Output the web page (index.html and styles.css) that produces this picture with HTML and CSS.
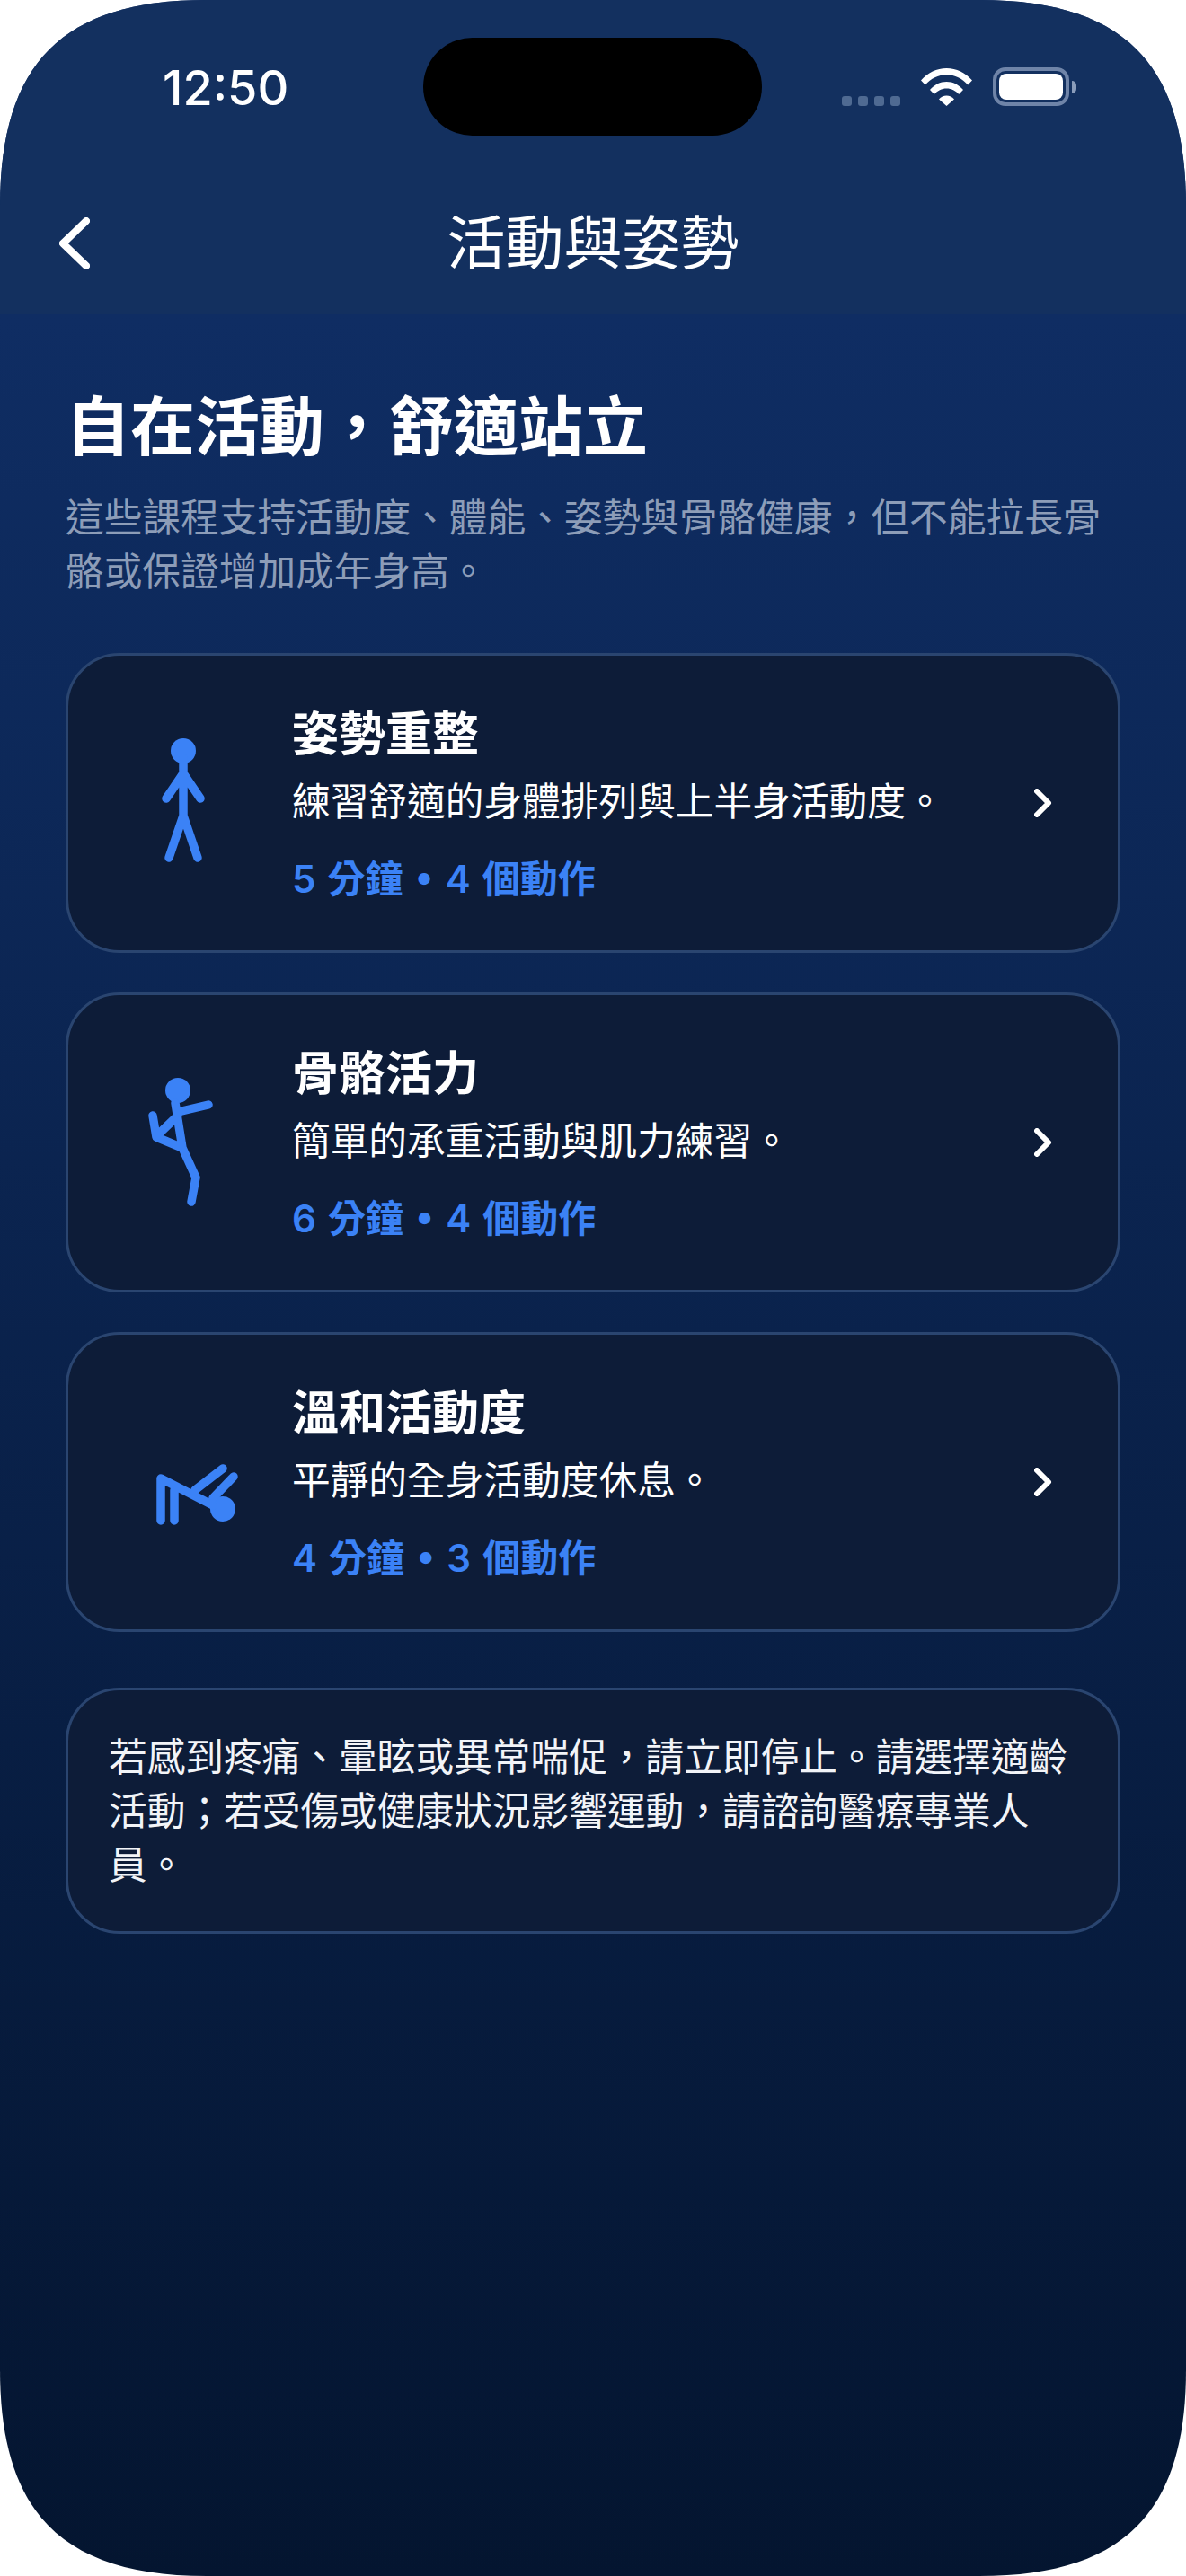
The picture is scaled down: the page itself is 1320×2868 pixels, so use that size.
FILE: index.html
```html
<!DOCTYPE html>
<html lang="zh-Hant">
<head>
<meta charset="utf-8">
<title>活動與姿勢</title>
<link rel="stylesheet" href="styles.css">
</head>
<body>
<div class="screen">
  <header class="top">
    <div class="status">
      <span class="time">12:50</span>
      <div class="island"></div>
      <div class="status-icons">
        <div class="dots"><i></i><i></i><i></i><i></i></div>
        <svg class="wifi" viewBox="0 0 57 42"><path d="M0 13.5C7.500 5 17.500 0 28.500 0S49.500 5 57 13.500L52.200 18.500C46 11.500 37.800 7.300 28.500 7.300S11 11.500 4.800 18.500Z"/><path d="M10 24C15 18.300 21.300 15 28.500 15S42 18.300 47 24L42.200 29C38.500 25 34 22.500 28.500 22.500S18.500 25 14.800 29Z"/><path d="M20 34.500C22.300 32 25.200 30.500 28.500 30.500S34.700 32 37 34.500L28.500 42Z"/></svg>
        <div class="battery"><div class="battery-body"><div class="battery-fill"></div></div><div class="battery-cap"></div></div>
      </div>
    </div>
    <div class="nav">
      <svg class="back" viewBox="0 0 34 58"><path d="M30 4 4 29l26 25"/></svg>
      <h1 class="nav-title">活動與姿勢</h1>
    </div>
  </header>
  <main class="content">
    <h2 class="heading">自在活動，舒適站立</h2>
    <p class="lead">這些課程支持活動度、體能、姿勢與骨骼健康，但不能拉長骨骼或保證增加成年身高。</p>
    <div class="cards">
      <article class="card">
        <svg class="figure" viewBox="0 0 120 140"><circle cx="60" cy="22" r="14" class="head"/><path d="M60 30V94M60 47 41 75M60 47 79 75M60 94 44 141M60 94 76 141"/></svg>
        <div class="card-text">
          <h3 class="card-title">姿勢重整</h3>
          <p class="card-desc">練習舒適的身體排列與上半身活動度。</p>
          <p class="card-meta">5 分鐘 • 4 個動作</p>
        </div>
        <svg class="chevron" viewBox="0 0 20 32"><path d="M3 3 16 16 3 29"/></svg>
      </article>
      <article class="card">
        <svg class="figure" viewBox="0 0 120 140"><circle cx="54" cy="22" r="14" class="head"/><path d="M51 36 59 86M54 46 88 38M54 50 31 72M59 86 30 74 26 50M59 86 74 119 69 146"/></svg>
        <div class="card-text">
          <h3 class="card-title">骨骼活力</h3>
          <p class="card-desc">簡單的承重活動與肌力練習。</p>
          <p class="card-meta">6 分鐘 • 4 個動作</p>
        </div>
        <svg class="chevron" viewBox="0 0 20 32"><path d="M3 3 16 16 3 29"/></svg>
      </article>
      <article class="card">
        <svg class="figure" viewBox="0 0 120 140"><circle cx="104" cy="110" r="14" class="head"/><path d="M35 123V76L93 106M50 123V89M73 89 104 65M93 98 116 74"/></svg>
        <div class="card-text">
          <h3 class="card-title">溫和活動度</h3>
          <p class="card-desc">平靜的全身活動度休息。</p>
          <p class="card-meta">4 分鐘 • 3 個動作</p>
        </div>
        <svg class="chevron" viewBox="0 0 20 32"><path d="M3 3 16 16 3 29"/></svg>
      </article>
    </div>
    <p class="notice">若感到疼痛、暈眩或異常喘促，請立即停止。請選擇適齡活動；若受傷或健康狀況影響運動，請諮詢醫療專業人員。</p>
  </main>
</div>
</body>
</html>
```
FILE: styles.css
```css
* { box-sizing: border-box; margin: 0; padding: 0; }
html, body { background: #fff; }
body { width: 1320px; height: 2868px; font-family: Inter, "Noto Sans CJK TC", sans-serif; }
.screen {
  position: relative;
  width: 1320px;
  height: 2868px;
  clip-path: path('M0 230C0 70 70 0 230 0H1090C1250 0 1320 70 1320 230V2638C1320 2798 1250 2868 1090 2868H230C70 2868 0 2798 0 2638Z');
  display: flex;
  flex-direction: column;
  background: linear-gradient(180deg, #0f2d63 350px, #041530 100%);
  color: #fff;
}
.top { height: 350px; background: #13305f; flex: none; }
.status { height: 192px; display: flex; align-items: flex-start; justify-content: space-between; padding: 70px 122px 0 181px; }
.time { font-size: 54px; line-height: 56px; font-weight: 500; }
.island { position: absolute; left: 471px; top: 42px; width: 377px; height: 109px; border-radius: 55px; background: #000; }
.status-icons { display: flex; align-items: flex-end; padding-top: 5px; }
.dots { display: flex; gap: 7px; margin-right: 23px; }
.dots i { width: 11px; height: 11px; border-radius: 3px; background: #4f6a92; }
.wifi { width: 57px; height: 42px; fill: #fff; margin-right: 23px; }
.battery { display: flex; align-items: center; }
.battery-body { width: 85px; height: 43px; border: 4px solid #6f84a8; border-radius: 14px; padding: 3px; }
.battery-fill { width: 100%; height: 100%; background: #fff; border-radius: 8px; }
.battery-cap { width: 5px; height: 14px; margin-left: 3px; background: #8a9cba; border-radius: 0 5px 5px 0; }
.nav { position: relative; height: 158px; display: flex; align-items: flex-start; justify-content: center; padding-top: 46px; }
.back { position: absolute; left: 66px; top: 50px; width: 34px; height: 58px; fill: none; stroke: #fff; stroke-width: 8; stroke-linecap: round; stroke-linejoin: round; }
.nav-title { font-size: 65px; line-height: 66px; font-weight: 400; }
.content { padding: 0 73px; flex: 1; }
.heading { font-size: 72px; line-height: 90px; font-weight: 700; margin-top: 80px; }
.lead { font-size: 42.7px; line-height: 60px; color: #8d9db8; margin-top: 27px; }
.cards { display: flex; flex-direction: column; gap: 44px; margin-top: 60px; }
.card {
  height: 334px;
  background: #0d1c38;
  border: 3px solid #2a4570;
  border-radius: 60px;
  display: flex;
  align-items: center;
  padding-left: 68px;
  padding-right: 73px;
}
.figure { width: 120px; height: 140px; flex: none; margin-bottom: 20px; fill: none; stroke: #3b82f6; stroke-width: 9.5; stroke-linecap: round; stroke-linejoin: round; overflow: visible; }
.head { fill: #3b82f6; stroke: none; }
.card-text { flex: 1; margin-left: 61px; margin-top: 8px; }
.card-title { font-size: 52px; line-height: 62px; font-weight: 700; }
.card-desc { font-size: 42.7px; line-height: 60px; margin-top: 14px; }
.card-meta { font-size: 42px; line-height: 60px; font-weight: 600; word-spacing: 2.5px; color: #3b82f6; margin-top: 26px; }
.chevron { width: 20px; height: 32px; flex: none; fill: none; stroke: #fff; stroke-width: 6; stroke-linecap: round; stroke-linejoin: round; }
.notice { margin-top: 62px; height: 274px; background: #0d1c38; border: 3px solid #2a4570; border-radius: 60px; padding: 45px 45px; font-size: 42.7px; line-height: 60px; color: #f2f4f8; }
```
